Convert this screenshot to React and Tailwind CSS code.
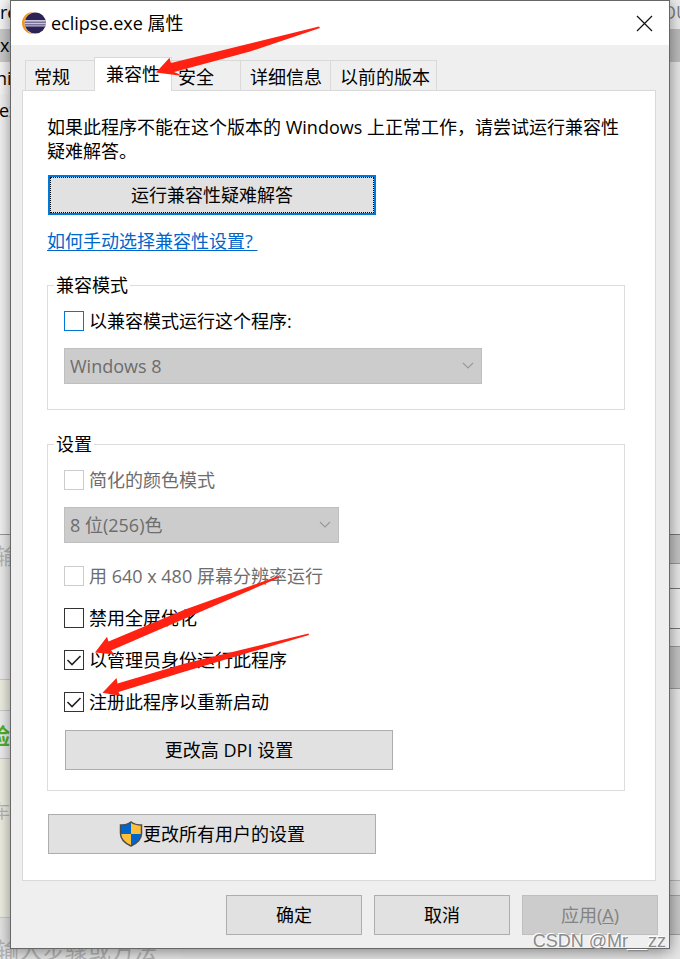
import clsx from "clsx";

const tabs = [
  { label: "常规", className: "w-[69px] h-[30px] pl-2 pt-1 border-l border-t" },
  {
    label: "兼容性",
    active: true,
    className: "w-[78px] h-[34px] pl-[11px] pt-1 border-x border-t bg-white",
  },
  { label: "安全", className: "w-[69px] h-[30px] pl-[6px] pt-1 border-t border-r" },
  { label: "详细信息", className: "w-[90px] h-[30px] pl-[9px] pt-1 border-t border-r" },
  { label: "以前的版本", className: "w-[106px] h-[30px] pl-[9px] pt-1 border-t border-r" },
];

function EclipseLogo() {
  return (
    <svg width="24" height="24" viewBox="0 0 24 24" aria-hidden="true">
      <circle cx="11" cy="12" r="11" fill="#f7941e" />
      <circle cx="13.5" cy="12" r="11" fill="#fff" />
      <circle cx="13.3" cy="12" r="10.6" fill="#2c2255" />
      <path d="M3 9h20.600v1.800H2.800zM2.700 11.600h21.200v1.900H2.700zM3 14.300h20.700v1.100H3.200z" fill="#c9c5dc" />
    </svg>
  );
}

function Shield() {
  return (
    <svg width="24" height="26" viewBox="0 0 24 26" aria-hidden="true">
      <path
        d="M12 1C9 3.200 5.500 4 1.500 4v8.500C1.500 18 5.500 22 12 25c6.500-3 10.500-7 10.500-12.500V4C18.500 4 15 3.200 12 1z"
        fill="#0066cc"
      />
      <path d="M12 1v12h10.500V4C18.500 4 15 3.200 12 1z" fill="#ffbf3a" />
      <path d="M1.500 13H12v12C5.500 22 1.500 18 1.500 13z" fill="#ffbf3a" />
      <path
        d="M12 1C9 3.200 5.500 4 1.500 4v8.500C1.500 18 5.500 22 12 25c6.500-3 10.500-7 10.500-12.500V4C18.500 4 15 3.200 12 1z"
        fill="none"
        stroke="#4d4d4d"
        strokeWidth="1.500"
      />
    </svg>
  );
}

function Check({ label, checked, disabled, highlight }) {
  return (
    <label className={clsx("flex items-center gap-[5px] h-6", disabled && "text-[#6d6d6d]")}>
      <span className="grid size-5">
        <input
          type="checkbox"
          defaultChecked={checked}
          disabled={disabled}
          className={clsx(
            "peer appearance-none size-5 border bg-white [grid-area:1/1]",
            disabled ? "border-[#cccccc]" : highlight ? "border-[#0078d7]" : "border-[#333333]"
          )}
        />
        <svg
          viewBox="0 0 20 20"
          className="size-5 [grid-area:1/1] pointer-events-none invisible peer-checked:visible"
          aria-hidden="true"
        >
          <path d="M3.500 10l4.500 4.500L16.500 6" fill="none" stroke="#222" strokeWidth="1.600" />
        </svg>
      </span>
      {label}
    </label>
  );
}

function DisabledSelect({ name, value, className }) {
  return (
    <div className={clsx("grid mt-[15px]", className)}>
      <select
        disabled
        aria-label={name}
        className="appearance-none [grid-area:1/1] w-full h-9 pl-[5px] border border-[#bfbfbf] bg-[#cccccc] text-[#6d6d6d] opacity-100"
      >
        <option>{value}</option>
      </select>
      <svg
        viewBox="0 0 12 8"
        className="[grid-area:1/1] w-3 h-2 self-center justify-self-end mr-2 pointer-events-none"
        aria-hidden="true"
      >
        <path d="M1 1l5 5 5-5" fill="none" stroke="#9a9a9a" strokeWidth="1.200" />
      </svg>
    </div>
  );
}

function Group({ title, className, children }) {
  return (
    <fieldset className={clsx("min-w-0 border border-[#dcdcdc] pl-4 mr-[6px]", className)}>
      <legend className="h-6 -ml-[10px] px-[2px]">{title}</legend>
      {children}
    </fieldset>
  );
}

function Button({ className, children, ...rest }) {
  return (
    <button
      type="button"
      className={clsx(
        "flex items-center justify-center h-10 border",
        rest.disabled
          ? "bg-[#cccccc] border-[#bfbfbf] text-[#838383]"
          : "bg-[#e1e1e1] border-[#adadad]",
        className
      )}
      {...rest}
    >
      {children}
    </button>
  );
}

// windows that stay partly visible around the dialog
function Backdrop() {
  return (
    <div className="[grid-area:1/1] flex justify-between bg-[#e4e4e4]" aria-hidden="true">
      <div className="flex flex-col w-[180px] whitespace-nowrap">
        <div className="h-[29px] bg-[#f8f8f8]">re</div>
        <div className="h-[33px] bg-[#cccccc] leading-8">xe</div>
        <div className="h-[32px] bg-[#f8f8f8] leading-8 -ml-1">ni</div>
        <div className="h-[440px] bg-[#f4f4f4] leading-8 -ml-px">ex</div>
        <div className="h-[145px] bg-[#eeeeee] border-t border-[#999999] pt-2 text-[22px] font-normal text-[#b8b8b8] -ml-1">
          输
        </div>
        <div className="h-[31px] bg-[#f0f0e4] border-t border-[#cccccc]" />
        <div className="h-[48px] bg-[#f0f0f0] border-t border-[#cccccc] leading-[48px] text-[22px] font-bold text-[#4fb332] -ml-3">
          验
        </div>
        <div className="h-[159px] bg-[#f0f0e4] border-t border-[#cccccc] pt-10 text-[#b8b8b8] -ml-2">
          车
        </div>
        <div className="h-[42px] bg-[#e6e6e6] border-t border-[#cccccc] pt-4 leading-8 text-[23px] font-normal text-[#b4b4b4] -ml-1">
          输入步骤或方法
        </div>
      </div>
      <div className="flex flex-col w-[18px] bg-[#e6e6e6] overflow-hidden whitespace-nowrap">
        <div className="h-[29px] bg-[#eeeeee] text-[#808080]">OU</div>
        <div className="h-[33px] bg-[#bdbdbd]" />
        <div className="h-[472px] bg-[#e8e8e8]" />
        <div className="h-[29px] bg-[#c4c4c4] border-t border-[#777777]" />
        <div className="h-[25px] bg-[#e8e8e8] border-t border-[#999999]" />
        <div className="h-[41px] bg-[#ececec] border-y border-[#777777]" />
        <div className="h-[17px] bg-[#e8e8e8]" />
        <div className="h-[43px] bg-[#c4c4c4] border-y border-[#999999]" />
        <div className="h-[191px] bg-[#e8e8e8]" />
        <div className="h-[15px] bg-[#dedede] border-t border-[#b4b4b4]" />
        <div className="h-[40px] bg-[#c8c8c8] border-y border-[#a0a0a0]" />
      </div>
    </div>
  );
}

function Arrows() {
  return (
    <svg
      width="680"
      height="959"
      viewBox="0 0 680 959"
      className="absolute top-0 left-0 z-20 pointer-events-none"
      fill="#ff2112"
      aria-hidden="true"
    >
      <path d="M156 72.500L169.500 57.700 171 63 250 43.500 319 26.500 320 28 250 51.500 174 72 183 76z" />
      <path d="M95 652.500L107 636.700 108.500 641.500 185 609.500 278.500 576 279.500 577.500 185 618.500 111 650.500 114.500 654.500z" />
      <path d="M102.500 692.700L116.500 678 117.500 683.500 185 663.500 308.500 633.500 309 635 185 671.500 118.500 692 120.500 696z" />
    </svg>
  );
}

function App() {
  return (
    <div className="relative grid overflow-hidden font-['Open_Sans','Noto_Sans_CJK_SC',sans-serif] font-[380] text-[18px] leading-6 text-black">
      <Backdrop />

      <main className="[grid-area:1/1] mx-[10px] mb-[10px] border border-[#666666] bg-[#efefef] shadow-[0_2px_14px_rgba(0,0,0,0.45)] z-10">
        <header className="flex items-center h-11 pl-[11px] pr-4 bg-white">
          <EclipseLogo />
          <h1 className="ml-[5px] font-[380]">eclipse.exe 属性</h1>
          <button type="button" aria-label="关闭" className="ml-auto">
            <svg width="17" height="17" viewBox="0 0 17 17" aria-hidden="true">
              <path d="M1 1l15 15M16 1L1 16" stroke="#111" strokeWidth="1.200" />
            </svg>
          </button>
        </header>

        <div className="pl-[11px] pr-[13px] pt-3">
          <nav role="tablist" className="flex items-end h-[33px] pl-[3px]">
            {tabs.map((tab) => (
              <button
                key={tab.label}
                type="button"
                role="tab"
                aria-selected={!!tab.active}
                className={clsx(
                  "flex items-start border-[#d9d9d9] whitespace-nowrap",
                  tab.active && "relative -mb-px",
                  tab.className
                )}
              >
                {tab.label}
              </button>
            ))}
          </nav>

          <section className="border border-[#d9d9d9] bg-white px-6 pt-6 pb-[26px]">
            <p>
              如果此程序不能在这个版本的 Windows 上正常工作，请尝试运行兼容性
              <br />
              疑难解答。
            </p>

            <button
              type="button"
              className="flex items-center justify-center w-[328px] h-10 mt-3 ml-px border-2 border-[#0078d7] bg-[#e1e1e1] outline-1 outline-dotted outline-black -outline-offset-3"
            >
              运行兼容性疑难解答
            </button>

            <a
              href="#help"
              className="block w-fit mt-[14px] text-[#0066cc] underline underline-offset-2 decoration-1 whitespace-pre"
            >
              {"如何手动选择兼容性设置? "}
            </a>

            <Group title="兼容模式" className="mt-5 pb-[25px]">
              <div className="mt-3">
                <Check label="以兼容模式运行这个程序:" highlight />
              </div>
              <DisabledSelect name="兼容模式" value="Windows 8" className="w-[418px]" />
            </Group>

            <Group title="设置" className="mt-[22px] pb-5">
              <div className="mt-3">
                <Check label="简化的颜色模式" disabled />
              </div>
              <DisabledSelect name="颜色模式" value="8 位(256)色" className="w-[275px]" />
              <div className="flex flex-col gap-[18px] mt-[21px]">
                <Check label="用 640 x 480 屏幕分辨率运行" disabled />
                <Check label="禁用全屏优化" />
                <Check label="以管理员身份运行此程序" checked />
                <Check label="注册此程序以重新启动" checked />
              </div>
              <Button className="w-[328px] mt-4 ml-px">更改高 DPI 设置</Button>
            </Group>

            <Button className="w-[328px] mt-[23px] ml-px">
              <Shield />
              更改所有用户的设置
            </Button>
          </section>
        </div>

        <footer className="flex justify-end gap-3 pt-[14px] pr-[11px] pb-[13px]">
          <Button className="w-[136px]">确定</Button>
          <Button className="w-[136px]">取消</Button>
          <Button className="w-[136px]" disabled>
            <span>
              应用(<u>A</u>)
            </span>
          </Button>
        </footer>
      </main>

      <Arrows />
      <div className="absolute right-[14px] bottom-[6px] z-20 font-['Liberation_Sans',sans-serif] text-[#8a8a8a] [text-shadow:-1px_-1px_0_#ffffff] pointer-events-none">
        CSDN @Mr__zz
      </div>
    </div>
  );
}

export default App;
